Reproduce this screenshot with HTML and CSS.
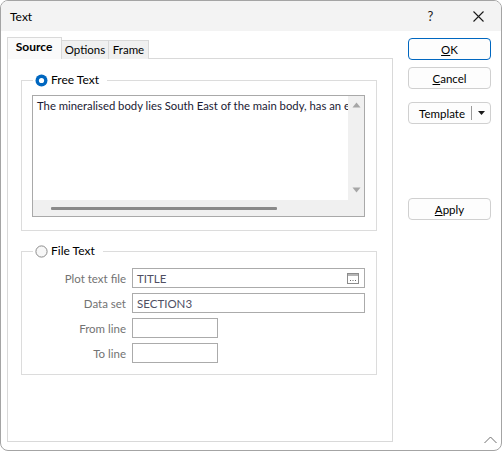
FILE: index.html
```html
<!DOCTYPE html>
<html>
<head>
<meta charset="utf-8">
<title>Text</title>
<link rel="stylesheet" href="styles.css">
</head>
<body>
<div class="window">
  <div class="titlebar">
    <span class="title">Text</span>
    <span class="caption-btn help">?</span>
    <span class="caption-btn close">
      <svg width="11" height="11" viewBox="0 0 11 11"><path d="M0.5 0.5 L10.5 10.5 M10.5 0.5 L0.5 10.5" stroke="#1a1a1a" stroke-width="1.1" fill="none"/></svg>
    </span>
  </div>
  <div class="content">
    <div class="tabs">
      <div class="tabstrip">
        <div class="tab active">Source</div>
        <div class="tab tab-options">Options</div>
        <div class="tab tab-frame">Frame</div>
      </div>
      <div class="panel">
        <fieldset class="group group-free">
          <legend>
            <svg class="radio" width="13" height="13" viewBox="0 0 13 13"><circle cx="6.5" cy="6.5" r="6" fill="#0067c0"/><circle cx="6.5" cy="6.5" r="2.6" fill="#fff"/></svg>
            <span>Free Text</span>
          </legend>
          <div class="memo">
            <div class="memo-text">The mineralised body lies South East of the main body, has an elongated shape and dips steeply to the west.</div>
            <div class="vscroll">
              <svg width="9" height="6" viewBox="0 0 9 6"><path d="M0.5 5.5 L4.5 0.5 L8.5 5.5 Z" fill="#a6a6a6"/></svg>
              <svg width="9" height="6" viewBox="0 0 9 6"><path d="M0.5 0.5 L4.5 5.5 L8.5 0.5 Z" fill="#a6a6a6"/></svg>
            </div>
            <div class="hscroll"><div class="hthumb"></div></div>
            <div class="corner"></div>
          </div>
        </fieldset>
        <fieldset class="group group-file">
          <legend>
            <svg class="radio" width="13" height="13" viewBox="0 0 13 13"><circle cx="6.5" cy="6.5" r="5.6" fill="#f7f7f7" stroke="#8a8a8a" stroke-width="1"/></svg>
            <span>File Text</span>
          </legend>
          <div class="row">
            <label class="lbl">Plot text file</label>
            <div class="input wide">
              <span>TITLE</span>
              <svg class="browse" width="12" height="11" viewBox="0 0 12 11"><rect x="0.5" y="0.5" width="11" height="10" fill="#fff" stroke="#8c8c8c"/><rect x="1" y="1" width="10" height="2" fill="#b5b5b5"/><rect x="3" y="7" width="1" height="1" fill="#6a6a6a"/><rect x="5.5" y="7" width="1" height="1" fill="#6a6a6a"/><rect x="8" y="7" width="1" height="1" fill="#6a6a6a"/></svg>
            </div>
          </div>
          <div class="row">
            <label class="lbl">Data set</label>
            <div class="input wide"><span>SECTION3</span></div>
          </div>
          <div class="row">
            <label class="lbl">From line</label>
            <div class="input narrow"></div>
          </div>
          <div class="row">
            <label class="lbl">To line</label>
            <div class="input narrow"></div>
          </div>
        </fieldset>
      </div>
    </div>
    <div class="buttons">
      <button class="btn default"><u>O</u>K</button>
      <button class="btn cancel"><u>C</u>ancel</button>
      <button class="btn template"><span class="tpl-text">Template</span><span class="tpl-sep"></span><svg width="7" height="4" viewBox="0 0 7 4"><path d="M0 0 L7 0 L3.5 4 Z" fill="#1a1a1a"/></svg></button>
      <button class="btn apply"><u>A</u>pply</button>
    </div>
  </div>
  <svg class="grip" width="13" height="8" viewBox="0 0 13 8"><path d="M0.5 7 L6.5 1 L12.5 7" stroke="#6f6f6f" stroke-width="1" fill="none"/></svg>
</div>
</body>
</html>
```
FILE: styles.css
```css
* { box-sizing: border-box; }
html, body { margin: 0; padding: 0; background: #fff; }
body {
  font-family: Lato, "Noto Sans", sans-serif;
  font-size: 11.5px;
  color: #000;
}
.window {
  width: 502px;
  height: 451px;
  border: 1px solid #a4a4a4;
  border-radius: 8px;
  overflow: hidden;
  background: #fff;
  display: flex;
  flex-direction: column;
  position: relative;
}
.titlebar {
  height: 30px;
  flex-shrink: 0;
  background: #f3f3f3;
  display: flex;
  align-items: center;
  padding-left: 9px;
}
.title { flex: 1; font-size: 12px; }
.caption-btn {
  width: 46px;
  height: 30px;
  display: flex;
  align-items: center;
  justify-content: center;
}
.help { font-size: 13px; color: #1a1a1a; padding-right: 3px; }
.content {
  flex: 1;
  display: flex;
  padding-top: 7px;
}
.tabs {
  margin-left: 6px;
  width: 386px;
  display: flex;
  flex-direction: column;
  padding-bottom: 8px;
}
.tabstrip {
  display: flex;
  align-items: flex-end;
  height: 21px;
  position: relative;
  z-index: 1;
  margin-bottom: -1px;
}
.tab {
  height: 19px;
  border: 1px solid #d9d9d9;
  border-bottom: none;
  background: #f0f0f0;
  display: flex;
  align-items: center;
  justify-content: center;
  margin-left: -1px;
  line-height: 1;
}
.tab.active {
  height: 22px;
  width: 55px;
  margin-left: 0;
  background: #fafafa;
  font-weight: bold;
  font-size: 12px;
  padding: 0 1px 3px 0;
}
.tab-options { width: 48px; }
.tab-frame { width: 41px; }
.panel {
  flex: 1;
  border: 1px solid #d9d9d9;
  background: #fff;
  padding: 14px 15px 0 13px;
}
.group {
  margin: 0;
  padding: 0;
  border: 1px solid #dcdcdc;
  min-width: 0;
}
.group legend {
  margin-left: 11px;
  padding: 0 8px 0 2px;
  height: 14px;
  display: flex;
  align-items: center;
  gap: 3px;
  line-height: 14px;
  font-size: 12px;
}
.group-free { padding: 8px 0 13px 0; }
.group-file { margin-top: 13px; padding: 10px 0 11px 0; }
.radio { display: block; flex-shrink: 0; }
.memo {
  margin-left: 10px;
  width: 333px;
  height: 122px;
  border: 1px solid #a9a9a9;
  display: grid;
  grid-template-columns: 1fr 16px;
  grid-template-rows: 1fr 16px;
  background: #fff;
}
.memo-text {
  overflow: hidden;
  white-space: nowrap;
  padding: 2px 0 0 4px;
  line-height: 16px;
  font-size: 11.3px;
  color: #1a1a33;
}
.vscroll {
  background: #f0f0f0;
  display: flex;
  flex-direction: column;
  justify-content: space-between;
  align-items: center;
  padding: 6px 0 7px 1px;
}
.vscroll svg { display: block; }
.hscroll {
  background: #f0f0f0;
  padding: 7px 0 0 18px;
}
.hthumb { width: 226px; height: 3px; background: #8a8a8a; border-radius: 1px; }
.corner { background: #f0f0f0; }
.row {
  display: flex;
  align-items: center;
  height: 20px;
  margin-bottom: 5px;
}
.row:last-child { margin-bottom: 0; }
.lbl {
  width: 104px;
  text-align: right;
  color: #737373;
  margin-right: 6px;
}
.input {
  height: 20px;
  border: 1px solid #ababab;
  display: flex;
  align-items: center;
  padding: 0 5px 0 4px;
  color: #4f4f63;
}
.input span { flex: 1; }
.wide { width: 233px; }
.narrow { width: 86px; }
.browse { display: block; }
.buttons {
  margin-left: 15px;
  width: 83px;
  display: flex;
  flex-direction: column;
}
.btn {
  font: inherit;
  color: #000;
  height: 22px;
  width: 83px;
  border: 1px solid #d0d0d0;
  border-radius: 4px;
  background: #fdfdfd;
  padding: 0;
  display: flex;
  align-items: center;
  justify-content: center;
}
.btn.default { border-color: #0067c0; }
.btn.cancel { margin-top: 7px; }
.btn.template { margin-top: 13px; }
.tpl-text { flex: 1; text-align: right; padding-right: 6px; }
.tpl-sep { width: 1px; height: 14px; background: #9a9a9a; margin-right: 6px; }
.template svg { display: block; margin-right: 5px; }
.btn.apply { margin-top: 74px; }
.grip { position: absolute; right: 4px; bottom: 6px; }
```
